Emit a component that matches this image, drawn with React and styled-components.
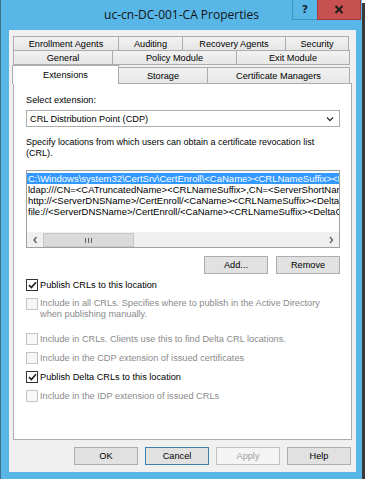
import React from "react";
import styled, { createGlobalStyle } from "styled-components";

const GlobalStyle = createGlobalStyle`
  *, *::before, *::after { box-sizing: border-box; }
  html, body { margin: 0; padding: 0; background: #ffffff; }
  body {
    font-family: "Liberation Sans", Arial, sans-serif;
    font-size: 9.2px;
    color: #000000;
  }
`;

const Window = styled.div`
  width: 362px;
  height: 479px;
  display: flex;
  flex-direction: column;
  background: #58b7e6;
  border-left: 1px solid #3b6f8a;
  box-shadow: 3px 3px 0 #3a3a3a;
`;

const TitleBar = styled.div`
  height: 30px;
  display: grid;
  grid-template-columns: 1fr auto 1fr;
  align-items: center;
`;

const Title = styled.div`
  grid-column: 2;
  padding-bottom: 2px;
  font-family: "Open Sans", "Noto Sans", sans-serif;
  font-size: 12px;
  color: #141414;
  white-space: nowrap;
`;

const Controls = styled.div`
  grid-column: 3;
  justify-self: end;
  align-self: start;
  display: flex;
  margin-right: 1px;
`;

const CaptionButton = styled.div`
  width: ${(p) => p.$w}px;
  height: 20px;
  display: flex;
  align-items: center;
  justify-content: center;
  background: ${(p) => (p.$close ? "#c75050" : "#58b7e6")};
  border: 1px solid ${(p) => (p.$close ? "#a33c3c" : "#3f95c4")};
  border-top: none;
  margin-left: -1px;
  font-family: "DejaVu Sans", sans-serif;
  font-weight: bold;
  font-size: 11px;
  color: #1b2536;
`;

const Body = styled.div`
  flex: 1;
  margin: 0 6px 7px 8px;
  padding: 6px 4px 7px 4px;
  background: #f0f0f0;
  display: flex;
  flex-direction: column;
`;

const TabRow = styled.div`
  display: flex;
  align-items: flex-end;
  height: ${(p) => p.$h}px;
  margin-left: ${(p) => p.$ml || 0}px;
`;

const Tab = styled.div`
  width: ${(p) => p.$w}px;
  height: ${(p) => p.$th || p.$h}px;
  display: flex;
  align-items: center;
  justify-content: center;
  white-space: nowrap;
  border: 1px solid #acacac;
  border-bottom: ${(p) => (p.$bottom ? "1px solid #acacac" : "none")};
  background: ${(p) => (p.$active ? "#ffffff" : "linear-gradient(#f2f2f2, #e6e6e6)")};
  position: relative;
  z-index: ${(p) => (p.$active ? 2 : 1)};
  margin-bottom: ${(p) => (p.$active ? -1 : 0)}px;
  & + & { margin-left: -1px; }
`;

const Panel = styled.div`
  height: 357px;
  background: #ffffff;
  border: 1px solid #acacac;
  padding: 10px 11px 0 12px;
  display: flex;
  flex-direction: column;
`;

const Label = styled.div`
  line-height: 12px;
  white-space: nowrap;
`;

const Select = styled.div`
  margin-top: 4px;
  height: 17px;
  border: 1px solid #acacac;
  background: #ffffff;
  display: flex;
  align-items: center;
  justify-content: space-between;
  padding: 0 5px 0 3px;
`;

const Description = styled.div`
  margin-top: 10px;
  line-height: 11px;
  font-size: 9px;
  white-space: nowrap;
`;

const ListBox = styled.div`
  margin-top: 11px;
  height: 78px;
  border: 1px solid #a0a0a0;
  display: flex;
  flex-direction: column;
  background: #ffffff;
`;

const Rows = styled.div`
  flex: 1;
  padding-top: 2px;
  overflow: hidden;
`;

const ListRow = styled.div`
  height: 11px;
  line-height: 11px;
  padding-left: 1px;
  font-size: 9.5px;
  white-space: nowrap;
  overflow: hidden;
  background: ${(p) => (p.$selected ? "#3399ff" : "transparent")};
  color: ${(p) => (p.$selected ? "#ffffff" : "#000000")};
`;

const ScrollBar = styled.div`
  height: 15px;
  display: flex;
  background: #f0f0f0;
  border-top: 1px solid #f0f0f0;
`;

const ArrowButton = styled.div`
  width: 16px;
  display: flex;
  align-items: center;
  justify-content: center;
  background: #f0f0f0;
`;

const Thumb = styled.div`
  width: 91px;
  background: #dadada;
  border: 1px solid #c8c8c8;
  display: flex;
  align-items: center;
  justify-content: center;
  gap: 2px;
`;

const Grip = styled.span`
  width: 1px;
  height: 5px;
  background: #606060;
`;

const Track = styled.div`
  flex: 1;
  background: #f0f0f0;
`;

const ButtonRow = styled.div`
  display: flex;
  justify-content: flex-end;
  gap: ${(p) => p.$gap}px;
  margin-top: ${(p) => p.$mt}px;
  margin-right: ${(p) => p.$mr || 0}px;
`;

const Button = styled.div`
  width: 64px;
  height: 18px;
  display: flex;
  align-items: center;
  justify-content: center;
  background: ${(p) => (p.$disabled ? "#f4f4f4" : "#e1e1e1")};
  border: 1px solid
    ${(p) => (p.$default ? "#3c7fb1" : p.$disabled ? "#bfbfbf" : "#adadad")};
  color: ${(p) => (p.$disabled ? "#a0a0a0" : "#000000")};
`;

const CheckList = styled.div`
  margin-top: 5px;
  display: flex;
  flex-direction: column;
  gap: 7px;
`;

const CheckRow = styled.div`
  display: flex;
  align-items: flex-start;
  gap: 2px;
  line-height: ${(p) => (p.$multi ? 11 : 12)}px;
  margin-bottom: ${(p) => (p.$multi ? 6 : 0)}px;
  color: ${(p) => (p.$disabled ? "#8a8a8a" : "#000000")};
  white-space: nowrap;
`;

const Box = styled.span`
  width: 12px;
  height: 12px;
  flex: none;
  display: flex;
  align-items: center;
  justify-content: center;
  background: ${(p) => (p.$disabled ? "#f7f7f7" : "#ffffff")};
  border: 1px solid ${(p) => (p.$disabled ? "#c4c4c4" : "#333333")};
`;

const Chevron = ({ dir }) => {
  const d = {
    down: "M1 1.5 L4 4.5 L7 1.5",
    left: "M3.5 1 L1 4 L3.5 7",
    right: "M1 1 L3.5 4 L1 7",
  }[dir];
  const w = dir === "down" ? 8 : 5;
  const h = dir === "down" ? 6 : 8;
  return (
    <svg width={w} height={h} viewBox={`0 0 ${w} ${h}`}>
      <path d={d} fill="none" stroke={dir === "down" ? "#333" : "#606060"} strokeWidth="1.3" />
    </svg>
  );
};

const Check = ({ checked, disabled, children, multi }) => (
  <CheckRow $disabled={disabled} $multi={multi}>
    <Box $disabled={disabled}>
      {checked && (
        <svg width="9" height="8" viewBox="0 0 9 8">
          <path d="M1 4.2 L3.4 6.6 L8 1.2" fill="none" stroke="#222" strokeWidth="1.7" />
        </svg>
      )}
    </Box>
    <span>{children}</span>
  </CheckRow>
);

const tabRows = [
  { h: 14, tabs: [["Enrollment Agents", 106], ["Auditing", 65], ["Recovery Agents", 104], ["Security", 64]] },
  { h: 15, bottom: true, tabs: [["General", 100], ["Policy Module", 125], ["Exit Module", 114]] },
];

const locations = [
  "C:\\Windows\\system32\\CertSrv\\CertEnroll\\<CaName><CRLNameSuffix><DeltaCRLAllowed>.crl",
  "ldap:///CN=<CATruncatedName><CRLNameSuffix>,CN=<ServerShortName>,CN=CDP,CN=Public Key Services",
  "http://<ServerDNSName>/CertEnroll/<CaName><CRLNameSuffix><DeltaCRLAllowed>.crl",
  "file://<ServerDNSName>/CertEnroll/<CaName><CRLNameSuffix><DeltaCRLAllowed>.crl",
];

export default function App() {
  return (
    <>
      <GlobalStyle />
      <Window>
        <TitleBar>
          <Title>uc-cn-DC-001-CA Properties</Title>
          <Controls>
            <CaptionButton $w={26}>?</CaptionButton>
            <CaptionButton $w={44} $close>
              <svg width="10" height="9" viewBox="0 0 10 9">
                <path d="M1.5 1 L8.5 8 M8.5 1 L1.5 8" stroke="#1b1b1b" strokeWidth="2" />
              </svg>
            </CaptionButton>
          </Controls>
        </TitleBar>

        <Body>
          {tabRows.map((row, i) => (
            <TabRow key={i} $h={row.h}>
              {row.tabs.map(([name, w]) => (
                <Tab key={name} $w={w} $h={row.h} $bottom={row.bottom}>
                  {name}
                </Tab>
              ))}
            </TabRow>
          ))}
          <TabRow $h={18} $ml={-1}>
            <Tab $w={107} $th={19} $active>
              Extensions
            </Tab>
            <Tab $w={90} $th={16}>Storage</Tab>
            <Tab $w={143} $th={16}>Certificate Managers</Tab>
          </TabRow>

          <Panel>
            <Label>Select extension:</Label>
            <Select>
              <span>CRL Distribution Point (CDP)</span>
              <Chevron dir="down" />
            </Select>
            <Description>
              Specify locations from which users can obtain a certificate revocation list
              <br />
              (CRL).
            </Description>

            <ListBox>
              <Rows>
                {locations.map((loc, i) => (
                  <ListRow key={loc} $selected={i === 0}>
                    {loc}
                  </ListRow>
                ))}
              </Rows>
              <ScrollBar>
                <ArrowButton>
                  <Chevron dir="left" />
                </ArrowButton>
                <Thumb>
                  <Grip />
                  <Grip />
                  <Grip />
                </Thumb>
                <Track />
                <ArrowButton>
                  <Chevron dir="right" />
                </ArrowButton>
              </ScrollBar>
            </ListBox>

            <ButtonRow $gap={8} $mt={8}>
              <Button>Add...</Button>
              <Button>Remove</Button>
            </ButtonRow>

            <CheckList>
              <Check checked>Publish CRLs to this location</Check>
              <Check disabled multi>
                Include in all CRLs. Specifies where to publish in the Active Directory
                <br />
                when publishing manually.
              </Check>
              <Check disabled>Include in CRLs. Clients use this to find Delta CRL locations.</Check>
              <Check disabled>Include in the CDP extension of issued certificates</Check>
              <Check checked>Publish Delta CRLs to this location</Check>
              <Check disabled>Include in the IDP extension of issued CRLs</Check>
            </CheckList>
          </Panel>

          <ButtonRow $gap={7} $mt={7} $mr={1}>
            <Button>OK</Button>
            <Button $default>Cancel</Button>
            <Button $disabled>Apply</Button>
            <Button>Help</Button>
          </ButtonRow>
        </Body>
      </Window>
    </>
  );
}
